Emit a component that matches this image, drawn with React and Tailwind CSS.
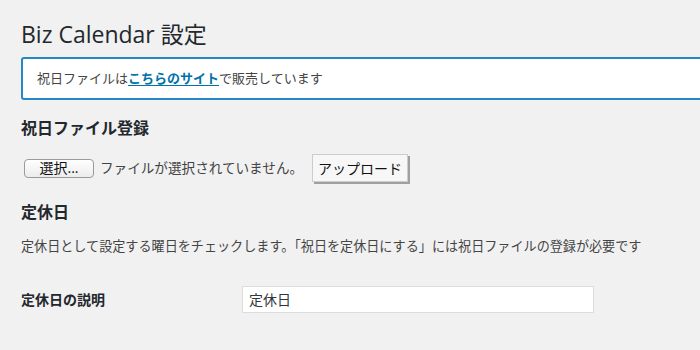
import React from 'react';

const font = { fontFamily: '"Open Sans", "Noto Sans CJK JP", sans-serif' };

const App = () => {
    return (
        <div className="w-[700px] h-[350px] overflow-hidden bg-[#f1f1f1] text-[#444]" style={font}>
            <div className="pl-[21px] pt-[20px]">
                <h1 className="text-[23px] leading-[29px] font-normal text-[#23282d]">Biz Calendar 設定</h1>

                <div className="mt-[8px] w-[720px] h-[43px] bg-white border-2 border-[#2389c4] rounded-[3px] flex items-center pl-[14px] text-[13px]">
                    <span>祝日ファイルは</span>
                    <a href="#" className="font-bold text-[#0073aa] underline underline-offset-2">こちらのサイト</a>
                    <span>で販売しています</span>
                </div>

                <h2 className="mt-[18px] text-[16px] leading-[20px] font-bold text-[#23282d]">祝日ファイル登録</h2>

                <div className="mt-[16px] flex items-center text-[13px]">
                    <button className="ml-[3px] w-[70px] h-[19px] bg-gradient-to-b from-white to-[#ececec] border border-[#9a9a9a] rounded-[4px] text-[14px] leading-none text-[#111]">選択...</button>
                    <span className="ml-[6px] text-[13.6px] text-[#444]">ファイルが選択されていません。</span>
                    <button className="ml-[9px] h-[28px] px-[5px] bg-[#f7f7f7] border border-[#ccc] shadow-[2px_2px_0_#a0a0a0] text-[14px] text-[#111]">アップロード</button>
                </div>

                <h2 className="mt-[20px] text-[16px] leading-[20px] font-bold text-[#23282d]">定休日</h2>
                <p className="mt-[15px] text-[13.1px] leading-[18px] text-[#444]">定休日として設定する曜日をチェックします。「祝日を定休日にする」には祝日ファイルの登録が必要です</p>

                <div className="mt-[31px] flex items-center">
                    <div className="w-[221px] text-[14px] font-bold text-[#23282d]">定休日の説明</div>
                    <div className="w-[352px] h-[27px] bg-white border border-[#ddd] flex items-center px-[6px] text-[14px] text-[#32373c]">定休日</div>
                </div>
            </div>
        </div>
    );
};

export default App;
